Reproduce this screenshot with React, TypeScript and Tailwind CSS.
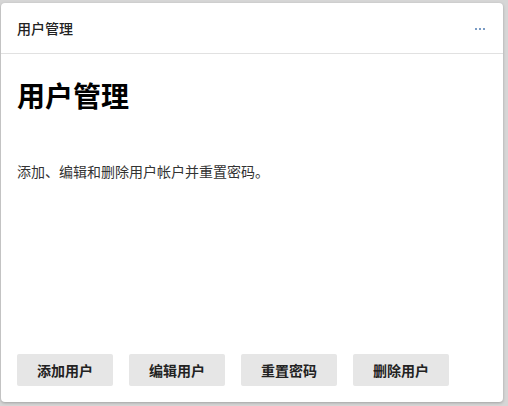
import React from 'react';

const actions = ['添加用户', '编辑用户', '重置密码', '删除用户'];

export default function App() {
  return (
    <div
      className="w-[508px] h-[406px] bg-[#d6d6d6] pl-[1px] pt-[3px]"
      style={{ fontFamily: '"Noto Sans CJK SC", "Noto Sans", sans-serif' }}
    >
      <div className="w-[502px] h-[399px] bg-white rounded-[4px] shadow-[0_1px_3px_rgba(0,0,0,0.25)] flex flex-col">
        {/* header */}
        <div className="h-[51px] flex items-center justify-between pl-[16px] pr-[18px] border-b border-[#e1e1e1]">
          <span className="text-[14px] font-medium text-[#222] mt-[1px]">用户管理</span>
          <span className="flex gap-[2px] items-center mt-[1px]">
            <span className="w-[2px] h-[2px] bg-[#7a9bc4]"></span>
            <span className="w-[2px] h-[2px] bg-[#7a9bc4]"></span>
            <span className="w-[2px] h-[2px] bg-[#7a9bc4]"></span>
          </span>
        </div>

        <div className="flex-1 flex flex-col px-[16px] pt-[23px] pb-[16px]">
          <h1 className="text-[28px] leading-[36px] font-bold text-black">用户管理</h1>
          <p className="mt-[48px] text-[14px] leading-[20px] text-[#333]">添加、编辑和删除用户帐户并重置密码。</p>

          <div className="mt-auto flex gap-[16px]">
            {actions.map(a => (
              <button
                key={a}
                className="w-[96px] h-[32px] rounded-[2px] bg-[#e6e6e6] text-[14px] font-semibold text-[#222] flex items-center justify-center"
              >
                {a}
              </button>
            ))}
          </div>
        </div>
      </div>
    </div>
  );
}
